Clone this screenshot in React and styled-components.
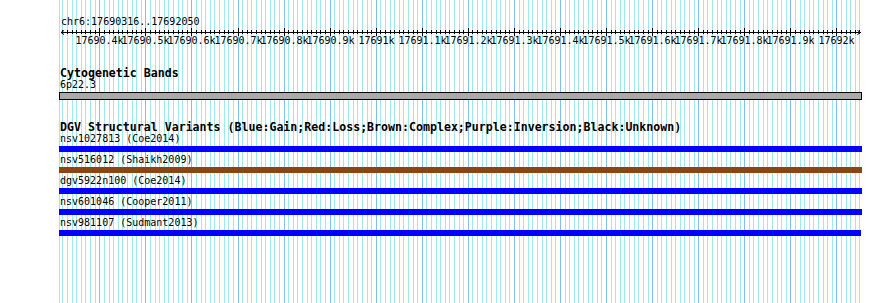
import React from "react";
import styled, { createGlobalStyle } from "styled-components";

const START = 17690316;
const END = 17692050;
const LEFT = 59;
const WIDTH = 803;
const SCALE = 0.4607;
const MONO = '"DejaVu Sans Mono", "Liberation Mono", monospace';

// local x inside the track area (which starts at LEFT)
const xOf = (bp) => 1.6 + (bp - START) * SCALE;

const GlobalStyle = createGlobalStyle`
  html, body {
    margin: 0;
    padding: 0;
    background: #ffffff;
  }
`;

const Canvas = styled.div`
  position: relative;
  width: 890px;
  height: 303px;
  overflow: hidden;
  background: #ffffff;
  font-family: ${MONO};
  color: #000000;
`;

const GridLayer = styled.svg`
  position: absolute;
  top: 0;
  left: ${LEFT}px;
  width: ${WIDTH}px;
  height: 303px;
`;

const Tracks = styled.div`
  position: relative;
  display: flex;
  flex-direction: column;
  margin-left: ${LEFT}px;
  width: ${WIDTH}px;
  padding-top: 17px;
`;

const Track = styled.section`
  display: flex;
  flex-direction: column;
  margin-bottom: ${(p) => p.$gap || 0}px;
`;

const TrackTitle = styled.div`
  height: 12px;
  line-height: 10.5px;
  font-size: 11.6px;
  font-weight: bold;
  padding-left: 1px;
  white-space: nowrap;
`;

const Label = styled.div`
  height: 11px;
  line-height: 10px;
  font-size: 10px;
  padding-left: ${(p) => p.$indent || 1}px;
  white-space: nowrap;
`;

const Items = styled.div`
  display: flex;
  flex-direction: column;
  gap: 3px;
`;

const Item = styled.div`
  display: flex;
  flex-direction: column;
`;

const Bar = styled.div`
  margin-top: 1px;
  height: 6px;
  width: ${(p) => p.$width || WIDTH}px;
  background: ${(p) => p.$color};
`;

const BandBar = styled.div`
  margin-top: 1px;
  height: 6px;
  background: #aaaaaa;
  border: 1px solid #000000;
`;

const RulerSvg = styled.svg`
  display: block;
  width: ${WIDTH}px;
  height: 18px;
`;

const Grid = () => {
  const lines = [];
  lines.push(<rect key="edge" x={0} y={0} width={1} height={303} fill="#9fe8ec" />);
  for (let bp = 17690320; bp <= END; bp += 10) {
    const major = bp % 100 === 0;
    lines.push(
      <rect
        key={bp}
        x={Math.round(xOf(bp))}
        y={0}
        width={1}
        height={303}
        fill={major ? "#80bff0" : "#9fe8ec"}
      />
    );
  }
  return (
    <GridLayer viewBox={`0 0 ${WIDTH} 303`} shapeRendering="crispEdges">
      {lines}
    </GridLayer>
  );
};

const tickLabel = (bp) => {
  const k = bp / 1000;
  return `${Number.isInteger(k) ? k : k.toFixed(1)}k`;
};

const Ruler = () => {
  const ticks = [];
  const labels = [];
  for (let bp = 17690320; bp <= END; bp += 10) {
    const x = Math.round(xOf(bp)) + 0.5;
    const major = bp % 100 === 0;
    ticks.push(
      <line key={bp} x1={x} x2={x} y1={major ? 0 : 2} y2={major ? 8 : 6} stroke="#000" />
    );
    if (major) {
      labels.push(
        <text key={bp} x={x} y={16} textAnchor="middle">
          {tickLabel(bp)}
        </text>
      );
    }
  }
  const right = WIDTH - 1.5;
  return (
    <RulerSvg viewBox={`0 0 ${WIDTH} 18`}>
      <g shapeRendering="crispEdges">
        <line x1={2} x2={right} y1={4.5} y2={4.5} stroke="#000" />
        {ticks}
      </g>
      <polyline points="5,2.5 2,4.5 5,6.5" fill="none" stroke="#000" />
      <polyline points={`${right - 3},2.5 ${right},4.5 ${right - 3},6.5`} fill="none" stroke="#000" />
      <g fontFamily={MONO} fontSize="10" fill="#000">
        {labels}
      </g>
    </RulerSvg>
  );
};

const variants = [
  { id: "nsv1027813 (Coe2014)", color: "#0000ff" },
  { id: "nsv516012 (Shaikh2009)", color: "#8b4513" },
  { id: "dgv5922n100 (Coe2014)", color: "#0000ff" },
  { id: "nsv601046 (Cooper2011)", color: "#0000ff" },
  { id: "nsv981107 (Sudmant2013)", color: "#0000ff", width: WIDTH - 1 },
];

export default function App() {
  return (
    <>
      <GlobalStyle />
      <Canvas>
        <Grid />
        <Tracks>
          <Track $gap={22}>
            <Label $indent={2}>chr6:17690316..17692050</Label>
            <Ruler />
          </Track>
          <Track $gap={22}>
            <TrackTitle>Cytogenetic Bands</TrackTitle>
            <Label>6p22.3</Label>
            <BandBar />
          </Track>
          <Track>
            <TrackTitle>
              DGV Structural Variants (Blue:Gain;Red:Loss;Brown:Complex;Purple:Inversion;Black:Unknown)
            </TrackTitle>
            <Items>
              {variants.map((v) => (
                <Item key={v.id}>
                  <Label>{v.id}</Label>
                  <Bar $color={v.color} $width={v.width} />
                </Item>
              ))}
            </Items>
          </Track>
        </Tracks>
      </Canvas>
    </>
  );
}
